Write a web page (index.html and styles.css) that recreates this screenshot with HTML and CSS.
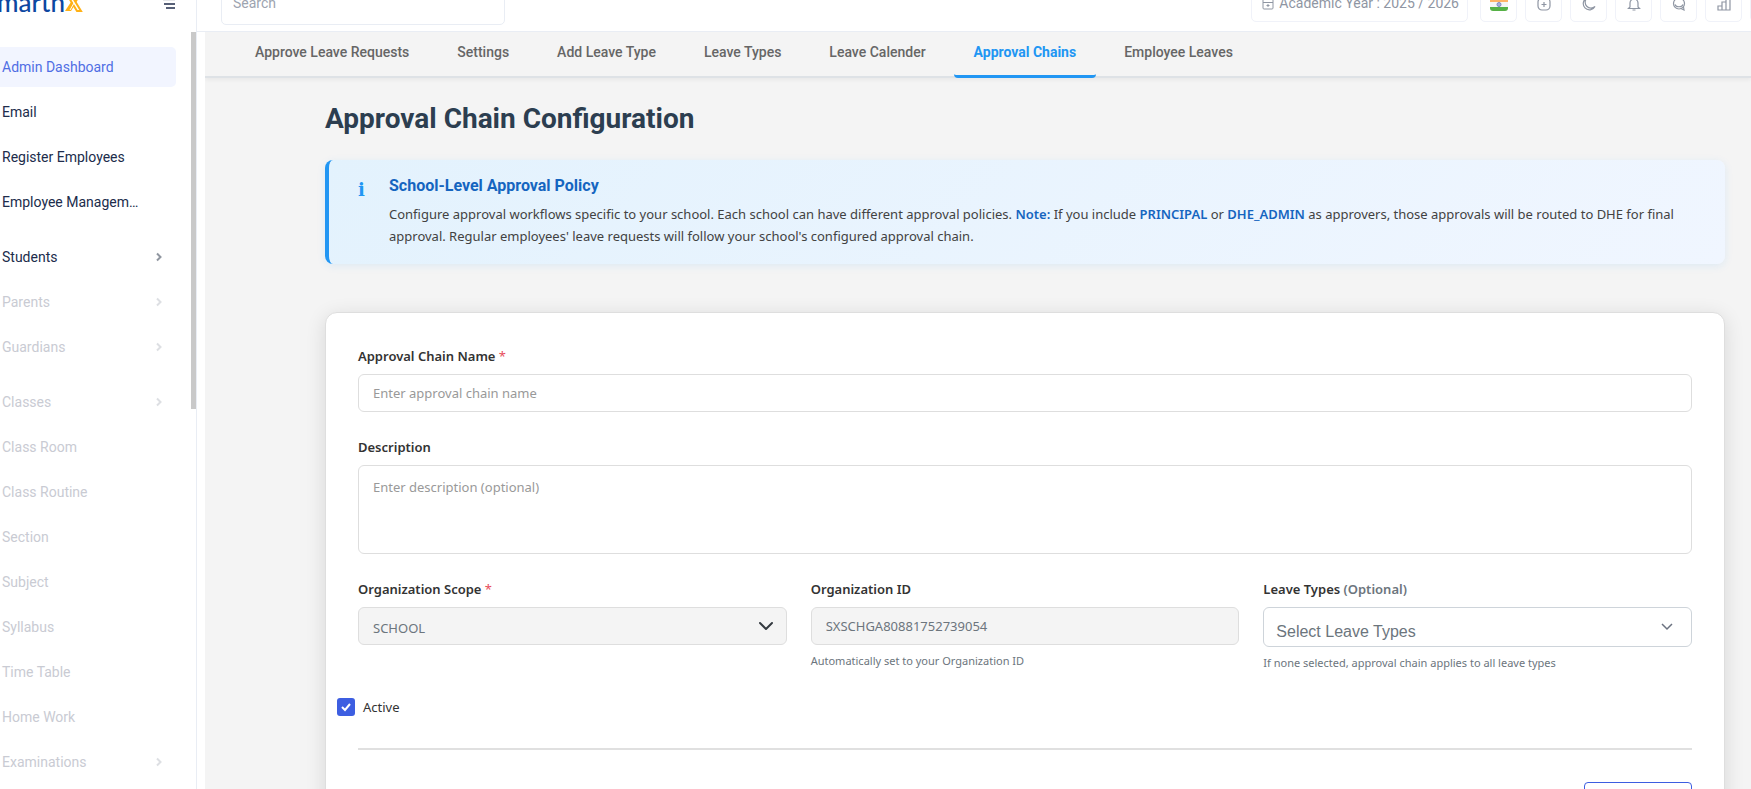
FILE: index.html
```html
<!DOCTYPE html>
<html lang="en">
<head>
<meta charset="utf-8">
<title>Approval Chain Configuration</title>
<link rel="stylesheet" href="styles.css">
</head>
<body>
<div class="app">
  <aside class="sidebar">
    <div class="brand">
      <a class="logo" href="#" aria-label="Home">
        <span class="logo-word">marth</span>
        <svg class="logo-mark" width="18" height="20" viewBox="0 0 18 20" aria-hidden="true"><path d="M12 1h5L6 19H0z" fill="#ffb116"/><path d="M1 1h4l11 18h-4z" fill="#fff" stroke="#ffb116" stroke-width="2"/><path d="M9 11L5 18" stroke="#fff" stroke-width="1"/></svg>
      </a>
      <button class="toggle" aria-label="Toggle menu">
        <svg width="12" height="12" viewBox="0 0 12 12" fill="none" stroke="#202c4b" stroke-width="1.5"><path d="M0 2h12" opacity=".15"/><path d="M1 6h11M3 10h9"/></svg>
      </button>
    </div>
    <div class="side-body">
      <nav class="menu">
        <ul class="group">
          <li><a class="item active" href="#">Admin Dashboard</a></li>
          <li><a class="item" href="#">Email</a></li>
          <li><a class="item" href="#">Register Employees</a></li>
          <li><a class="item" href="#">Employee Managem…</a></li>
        </ul>
        <ul class="group">
          <li><a class="item" href="#">Students<svg class="chev" viewBox="0 0 8 10"><path d="M2 1.500l3.500 3.500-3.500 3.500"/></svg></a></li>
          <li><a class="item off" href="#">Parents<svg class="chev" viewBox="0 0 8 10"><path d="M2 1.500l3.500 3.500-3.500 3.500"/></svg></a></li>
          <li><a class="item off" href="#">Guardians<svg class="chev" viewBox="0 0 8 10"><path d="M2 1.500l3.500 3.500-3.500 3.500"/></svg></a></li>
        </ul>
        <ul class="group">
          <li><a class="item off" href="#">Classes<svg class="chev" viewBox="0 0 8 10"><path d="M2 1.500l3.500 3.500-3.500 3.500"/></svg></a></li>
          <li><a class="item off" href="#">Class Room</a></li>
          <li><a class="item off" href="#">Class Routine</a></li>
          <li><a class="item off" href="#">Section</a></li>
          <li><a class="item off" href="#">Subject</a></li>
          <li><a class="item off" href="#">Syllabus</a></li>
          <li><a class="item off" href="#">Time Table</a></li>
          <li><a class="item off" href="#">Home Work</a></li>
          <li><a class="item off" href="#">Examinations<svg class="chev" viewBox="0 0 8 10"><path d="M2 1.500l3.500 3.500-3.500 3.500"/></svg></a></li>
        </ul>
      </nav>
      <div class="track"><div class="thumb"></div></div>
    </div>
  </aside>

  <div class="page">
    <header class="topbar">
      <input class="search" type="search" placeholder="Search" aria-label="Search">
      <div class="tools">
        <button class="year">
          <svg width="12" height="14" viewBox="0 0 12 14" fill="none" stroke="currentColor"><rect x="1" y="2" width="10" height="11" rx="1"/><path d="M1 6.500h10M3.500 0v4M8.500 0v4"/><path d="M5 9h2v1H5z" fill="currentColor"/></svg>
          <span>Academic Year : 2025 / 2026</span>
        </button>
        <button class="tool" aria-label="Language">
          <svg width="18" height="14" viewBox="0 0 18 14"><path d="M2 0h14a2 2 0 0 1 2 2v3H0V2a2 2 0 0 1 2-2z" fill="#ffb366"/><path d="M0 5h18v5H0z" fill="#f5f5f5"/><path d="M0 10h18v1a3 3 0 0 1-3 3H3a3 3 0 0 1-3-3z" fill="#56b146"/><circle cx="9" cy="7.500" r="2" fill="#aab0d8" stroke="#7f87c0"/></svg>
        </button>
        <button class="tool" aria-label="Add">
          <svg width="14" height="14" viewBox="0 0 14 14" fill="none" stroke="currentColor" stroke-width="1.200"><rect x="1" y="1" width="12" height="12" rx="4"/><path d="M7 5v5M4.500 7.500h5"/></svg>
        </button>
        <button class="tool" aria-label="Dark mode">
          <svg width="14" height="14" viewBox="0 0 14 14" fill="none" stroke="currentColor" stroke-width="1.200"><path d="M5 1a6.200 6.200 0 1 0 8 8.500A5.800 5.800 0 0 1 5 1z"/></svg>
        </button>
        <button class="tool" aria-label="Notifications">
          <svg width="14" height="14" viewBox="0 0 14 14" fill="none" stroke="currentColor" stroke-width="1.200"><path d="M3 10V6a4 4 0 0 1 8 0v4l1.500 1.500h-11zM5.500 13h3M7 0v2"/></svg>
        </button>
        <button class="tool" aria-label="Messages">
          <svg width="14" height="14" viewBox="0 0 14 14" fill="none" stroke="currentColor" stroke-width="1.200"><circle cx="7" cy="6.500" r="5.500"/><path d="M3 7.500c1 3 7 3 8 0M9 11.500l3 1.500-.5-3"/></svg>
        </button>
        <button class="tool" aria-label="Reports">
          <svg width="14" height="14" viewBox="0 0 14 14" fill="none" stroke="currentColor" stroke-width="1.200"><path d="M1 9h4v4H1zM5 5h4v8H5zM9 1h4v12H9z"/></svg>
        </button>
        <button class="tool" aria-label="Full screen"></button>
      </div>
    </header>

    <main class="main">
      <nav class="tabs">
        <a class="tab" href="#">Approve Leave Requests</a>
        <a class="tab" href="#">Settings</a>
        <a class="tab" href="#">Add Leave Type</a>
        <a class="tab" href="#">Leave Types</a>
        <a class="tab" href="#">Leave Calender</a>
        <a class="tab current" href="#">Approval Chains</a>
        <a class="tab" href="#">Employee Leaves</a>
      </nav>

      <div class="content">
        <h1 class="title">Approval Chain Configuration</h1>

        <section class="notice">
          <span class="notice-icon" aria-hidden="true">i</span>
          <div>
            <h2 class="notice-title">School-Level Approval Policy</h2>
            <p class="notice-text">Configure approval workflows specific to your school. Each school can have different approval policies. <strong>Note:</strong> If you include <strong>PRINCIPAL</strong> or <strong>DHE_ADMIN</strong> as approvers, those approvals will be routed to DHE for final approval. Regular employees' leave requests will follow your school's configured approval chain.</p>
          </div>
        </section>

        <form class="card">
          <div class="field">
            <label class="label" for="chain-name">Approval Chain Name <span class="req">*</span></label>
            <input class="control" id="chain-name" type="text" placeholder="Enter approval chain name">
          </div>
          <div class="field">
            <label class="label" for="description">Description</label>
            <textarea class="control area" id="description" placeholder="Enter description (optional)"></textarea>
          </div>
          <div class="columns">
            <div class="field">
              <label class="label" for="scope">Organization Scope <span class="req">*</span></label>
              <select class="control scope" id="scope" disabled><option>SCHOOL</option></select>
            </div>
            <div class="field">
              <label class="label" for="org-id">Organization ID</label>
              <input class="control" id="org-id" type="text" value="SXSCHGA80881752739054" disabled>
              <small class="help">Automatically set to your Organization ID</small>
            </div>
            <div class="field">
              <label class="label" for="leave-types">Leave Types <span class="opt">(Optional)</span></label>
              <select class="control types" id="leave-types"><option>Select Leave Types</option></select>
              <small class="help">If none selected, approval chain applies to all leave types</small>
            </div>
          </div>
          <label class="check"><input class="box" type="checkbox" checked>Active</label>
          <div class="actions"><button class="cancel" type="button" aria-label="Cancel"></button></div>
        </form>
      </div>
    </main>
  </div>
</div>
</body>
</html>
```

FILE: styles.css
```css
* { box-sizing: border-box; }

body {
  margin: 0;
  font-family: Roboto, "Liberation Sans", sans-serif;
  font-size: 14px;
  background: #fff;
}

button, input, select, textarea { font: inherit; }
ul, h1, h2, p { margin: 0; padding: 0; }
ul { list-style: none; }
a { text-decoration: none; color: inherit; }

.app { display: flex; height: 100vh; overflow: hidden; }

/* Sidebar */
.sidebar {
  width: 197px;
  flex: none;
  display: flex;
  flex-direction: column;
  border-right: 1px solid #e9edf4;
}
.brand {
  flex: none;
  height: 32px;
  overflow: hidden;
  display: flex;
  justify-content: space-between;
  align-items: flex-start;
  padding-right: 21px;
}
.logo { display: flex; align-items: baseline; margin-top: -10px; }
.logo-word { font: 500 26px/24px Lato, sans-serif; color: #0d47a1; margin-left: -3px; }
.logo-mark { flex: none; }
.toggle { display: flex; align-items: flex-end; height: 10px; padding: 0; border: 0; background: none; }
.toggle svg { flex: none; }
.side-body { display: flex; flex: 1; min-height: 0; }
.menu { flex: 1; padding: 15px 15px 0 0; overflow: hidden; }
.group { display: grid; gap: 5px; margin-bottom: 15px; }
.item {
  display: flex;
  align-items: center;
  justify-content: space-between;
  height: 40px;
  padding: 0 13px 0 2px;
  border-radius: 0 5px 5px 0;
  color: #202c4b;
}
.item.active { background: #f2f5ff; color: #506ee4; }
.item.off { color: #c9cbd3; }
.chev { width: 8px; height: 10px; fill: none; stroke: #9096a0; stroke-width: 2; }
.off .chev { stroke: #dddfe3; }
.track { width: 5px; }
.thumb { height: 377px; background: #c9c9c9; }

/* Top bar */
.page { flex: 1; min-width: 0; display: flex; flex-direction: column; }
.topbar {
  flex: none;
  height: 32px;
  overflow: hidden;
  display: flex;
  justify-content: space-between;
  align-items: flex-end;
  padding: 0 0 6px 24px;
  border-bottom: 1px solid #e9edf4;
}
.search {
  width: 284px;
  height: 44px;
  padding: 0 11px;
  border: 1px solid #e9edf4;
  border-radius: 5px;
  color: #202c4b;
}
.search::placeholder { color: #9da4b0; }
.tools { display: flex; align-items: flex-end; gap: 8px; margin-right: -36px; padding-bottom: 3px; }
.year {
  display: flex;
  align-items: center;
  gap: 5px;
  height: 38px;
  margin-right: 4px;
  padding: 0 8px 0 10px;
  border: 1px solid #f0f2f9;
  border-radius: 5px;
  background: #fff;
  color: #8f96a3;
}
.tool {
  display: flex;
  align-items: center;
  justify-content: center;
  width: 37px;
  height: 37px;
  padding: 0;
  border: 1px solid #f0f2f9;
  border-radius: 5px;
  background: #fff;
  color: #8f96a3;
}

/* Tabs */
.main { flex: 1; min-height: 0; margin-left: 8px; background: #f4f4f4; overflow: hidden; }
.tabs {
  display: flex;
  gap: 8px;
  padding: 0 30px;
  border-bottom: 2px solid #dee2e6;
  box-shadow: 0 2px 4px rgba(0, 0, 0, .05);
}
.tab {
  height: 46px;
  margin-bottom: -2px;
  padding: 0 20px;
  border-bottom: 3px solid transparent;
  border-radius: 4px;
  font-weight: 500;
  line-height: 41px;
  color: #666;
}
.tab.current { color: #2196f3; border-color: #2196f3; font-weight: 700; }

/* Content */
.content { padding: 21px 26px 0 120px; }
.title { font-size: 28px; line-height: 40px; font-weight: 700; color: #2c3e50; }
.notice {
  display: flex;
  gap: 24px;
  margin: 21px 0 48px;
  padding: 16px 28px 17px 29px;
  border-left: 4px solid #2196f3;
  border-radius: 8px;
  background: linear-gradient(135deg, #e3f2fd, #f0f6ff);
  box-shadow: 0 2px 8px rgba(33, 150, 243, .1);
}
.notice-icon { flex: none; width: 7px; font: 700 18px/28px "DejaVu Serif", serif; color: #2196f3; }
.notice-title { font-size: 16px; line-height: 20px; font-weight: 700; color: #1565c0; margin-bottom: 7px; }
.notice-text { font: 13px/22px "Noto Sans", sans-serif; color: #424242; }
.notice-text strong { font-weight: 600; color: #1565c0; }

/* Form */
.card {
  display: flex;
  flex-direction: column;
  padding: 32px;
  border: 1px solid #dedede;
  border-radius: 12px;
  background: #fff;
  box-shadow: 0 4px 20px rgba(0, 0, 0, .12);
  font-family: "Noto Sans", sans-serif;
  font-size: 13px;
}
.field { display: flex; flex-direction: column; margin-bottom: 24px; }
.label { line-height: 23px; margin-bottom: 6px; font-weight: 600; color: #333; }
.req { color: #e74c5b; font-weight: 400; }
.opt { color: #6c757d; }
.control {
  width: 100%;
  height: 38px;
  padding: 0 14px;
  border: 1px solid #dedede;
  border-radius: 6px;
  background-color: #fff;
  color: #6c757d;
}
.control::placeholder { color: #999; }
.control:disabled { background-color: #f4f4f4; color: #6c757d; opacity: 1; }
.area { height: 89px; padding: 12px 14px; resize: none; display: block; }
.columns { display: grid; grid-template-columns: repeat(3, 1fr); gap: 24px; }
select.control { appearance: none; background-repeat: no-repeat; }
.scope {
  padding-top: 4px;
  background-image: url("data:image/svg+xml,%3Csvg xmlns='http://www.w3.org/2000/svg' viewBox='0 0 16 16'%3E%3Cpath fill='none' stroke='%23343a40' stroke-width='2' stroke-linecap='round' stroke-linejoin='round' d='m2 5 6 6 6-6'/%3E%3C/svg%3E");
  background-size: 16px;
  background-position: right 12px center;
}
.types {
  height: 40px;
  padding: 8px 12px 0;
  border-color: #ced4da;
  font: 16px "Liberation Sans", sans-serif;
  background-image: url("data:image/svg+xml,%3Csvg xmlns='http://www.w3.org/2000/svg' viewBox='0 0 12 12'%3E%3Cpath fill='none' stroke='%236b7280' stroke-width='1.500' d='m1 3 5 5 5-5'/%3E%3C/svg%3E");
  background-size: 12px;
  background-position: right 18px center;
}
.help { margin-top: 6px; font-size: 11px; line-height: 20px; color: #6c757d; }
.check {
  display: flex;
  align-items: center;
  align-self: flex-start;
  gap: 8px;
  margin-left: -21px;
  line-height: 20px;
  color: #333;
}
.box {
  appearance: none;
  width: 18px;
  height: 18px;
  margin: 0;
  border-radius: 3px;
  background: #3d5ee1 url("data:image/svg+xml,%3Csvg xmlns='http://www.w3.org/2000/svg' viewBox='0 0 18 18'%3E%3Cpath fill='none' stroke='white' stroke-width='2' d='m5 9 3 3 5-6'/%3E%3C/svg%3E");
}
.actions { display: flex; justify-content: flex-end; margin-top: 31px; padding-top: 32px; border-top: 2px solid #e0e0e0; }
.cancel { width: 108px; height: 40px; border: 1px solid #3d5ee1; border-radius: 4px; background: #fff; color: #3d5ee1; }
```
